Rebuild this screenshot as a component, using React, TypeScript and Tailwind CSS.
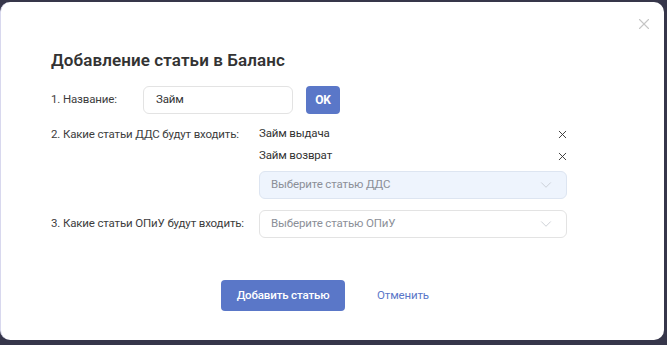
import { ChevronDown, X } from "lucide-react";

const font = { fontFamily: "Roboto, 'Noto Sans', sans-serif" };

function Select({ placeholder, active }: { placeholder: string; active?: boolean }) {
  return (
    <div
      className={`flex h-[28px] w-[308px] items-center justify-between rounded-[6px] border pl-[11px] pr-[11px] ${
        active ? "border-[#dde5f1] bg-[#eef4fd]" : "border-[#e3e3e3] bg-white"
      }`}
    >
      <span className="text-[11.5px] tracking-[-0.15px] text-[#8b8f98]">{placeholder}</span>
      <ChevronDown size={18} strokeWidth={1.1} className="text-[#c3c7cf]" />
    </div>
  );
}

export default function App() {
  return (
    <div className="h-[345px] w-[667px] bg-[#36364a] pb-[5px] pr-[3px] pt-[2px]" style={font}>
      <div className="relative h-full rounded-[10px] border-l border-[#d8d8ee] bg-white pl-[50px] pt-[47px]">
        <X size={18} strokeWidth={1.5} className="absolute right-[11px] top-[13px] text-[#c6c6c6]" />

        <h1 className="text-[17px] font-semibold leading-[22px] tracking-[0.1px] text-[#333333]">Добавление статьи в Баланс</h1>

        <div className="mt-[15px] flex items-center text-[11.5px] tracking-[-0.15px]">
          <span className="w-[92px] text-[#3d3d3d]">1. Название:</span>
          <div className="flex h-[28px] w-[150px] items-center rounded-[6px] border border-[#e3e3e3] pl-[12px] text-[#333]">
            Займ
          </div>
          <button className="ml-[13px] h-[28px] w-[34px] rounded-[4px] bg-[#5a77c8] text-[12px] font-bold text-white">OK</button>
        </div>

        <div className="mt-[9px] flex text-[11.5px] tracking-[-0.15px]">
          <span className="w-[208px] pt-[3px] text-[#3d3d3d]">2. Какие статьи ДДС будут входить:</span>
          <div className="flex w-[308px] flex-col">
            <div className="flex h-[22px] items-center justify-between text-[#333]">
              Займ выдача
              <X size={13} strokeWidth={1.7} className="-mr-[2px] text-[#333]" />
            </div>
            <div className="flex h-[22px] items-center justify-between text-[#333]">
              Займ возврат
              <X size={13} strokeWidth={1.7} className="-mr-[2px] text-[#333]" />
            </div>
            <div className="mt-[4px]">
              <Select placeholder="Выберите статью ДДС" active />
            </div>
          </div>
        </div>

        <div className="mt-[11px] flex items-start text-[11.5px] tracking-[-0.15px]">
          <span className="w-[208px] pt-[5px] text-[#3d3d3d]">3. Какие статьи ОПиУ будут входить:</span>
          <Select placeholder="Выберите статью ОПиУ" />
        </div>

        <div className="mt-[42px] flex items-center pl-[170px] text-[11.5px] tracking-[-0.15px]">
          <button className="h-[31px] w-[124px] rounded-[4px] bg-[#5a77c8] font-medium text-white">Добавить статью</button>
          <span className="ml-[32px] text-[#5a77c8]">Отменить</span>
        </div>
      </div>
    </div>
  );
}
